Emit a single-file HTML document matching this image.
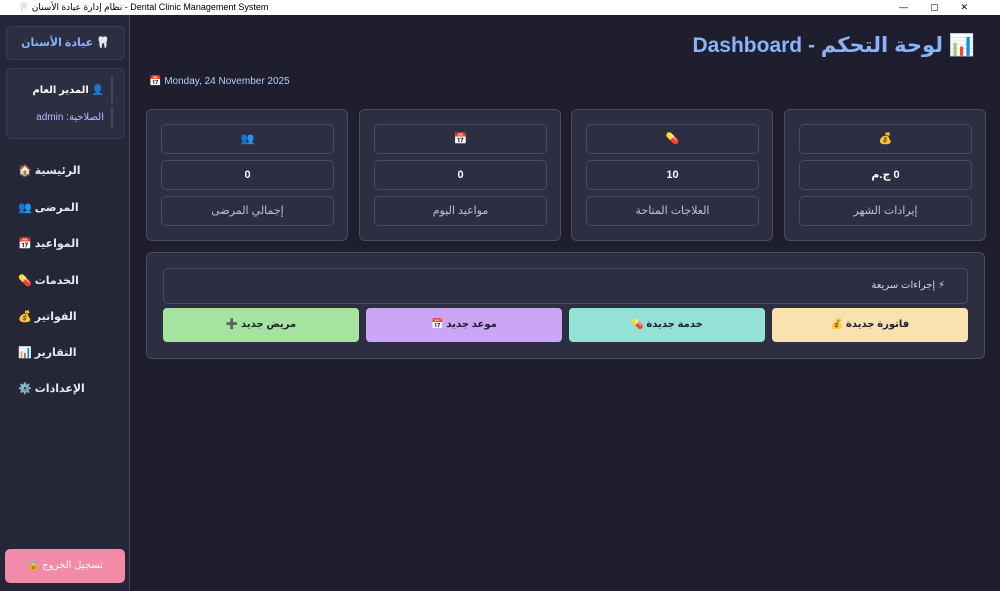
<!DOCTYPE html>
<html><head><meta charset="utf-8"><style>
*{box-sizing:border-box;margin:0;padding:0}
body{width:1000px;height:591px;overflow:hidden;background:#1e1e2e;font-family:"Liberation Sans","DejaVu Sans",sans-serif;color:#cdd6f4;position:relative;font-size:11px}
.tb{position:absolute;left:0;top:0;width:1000px;height:15px;background:#fff;color:#000;font-size:9px;line-height:15px;padding-left:18px}
.tb .ctl{position:absolute;right:10px;top:0;letter-spacing:22px}
.side{position:absolute;left:0;top:15px;width:130px;height:576px;background:#252638;border-right:1px solid #45475a}
.box{position:absolute;background:#2d2e42;border:1px solid #3c3d52;border-radius:5px}
.abs{position:absolute;white-space:nowrap}
.r{direction:rtl}
.nav{position:absolute;left:18px;font-size:11px;font-weight:bold;color:#e6e9f5;direction:rtl;white-space:nowrap}
.card{position:absolute;top:109px;width:202px;height:132px;background:#2d2e42;border:1px solid #4a4b60;border-radius:6px}
.in{position:absolute;left:14px;width:173px;height:30px;border:1px solid #4a4b60;border-radius:5px;text-align:center;line-height:28px;font-size:11px;direction:rtl}
.btn{position:absolute;top:308px;width:196px;height:34px;border-radius:4px;text-align:center;line-height:34px;color:#1e1e2e;font-weight:bold;font-size:10px;direction:rtl}
</style></head><body>
<div class="tb">🦷 نظام إدارة عيادة الأسنان - Dental Clinic Management System<span class="ctl">—▢✕</span></div>
<div class="side">
<div class="box r" style="left:6px;top:11px;width:119px;height:34px;text-align:center;line-height:32px;color:#89b4fa;font-size:11px;font-weight:bold">🦷 عيادة الأسنان</div>
<div class="box" style="left:6px;top:53px;width:119px;height:71px">
<div class="abs r" style="right:20px;top:16px;font-weight:bold;color:#fff;font-size:10px">👤 المدير العام</div>
<div class="abs r" style="right:20px;top:43px;color:#b4befe;font-size:10px">الصلاحية: admin</div>
<div class="abs" style="left:104px;top:8px;width:2px;height:26px;background:#45475a"></div>
<div class="abs" style="left:104px;top:38px;width:2px;height:22px;background:#45475a"></div>
</div>
<div class="nav" style="top:149px">الرئيسية 🏠</div>
<div class="nav" style="top:186px">المرضى 👥</div>
<div class="nav" style="top:222px">المواعيد 📅</div>
<div class="nav" style="top:259px">الخدمات 💊</div>
<div class="nav" style="top:295px">الفواتير 💰</div>
<div class="nav" style="top:331px">التقارير 📊</div>
<div class="nav" style="top:367px">الإعدادات ⚙️</div>
<div class="abs r" style="left:5px;top:534px;width:120px;height:34px;background:#f38ba8;border-radius:5px;text-align:center;line-height:34px;color:#fff;font-size:10px">تسجيل الخروج 🔒</div>
</div>
<div class="abs r" style="right:25px;top:33px;font-size:21px;font-weight:bold;color:#89b4fa">📊 لوحة التحكم - Dashboard</div>
<div class="abs" style="left:149px;top:76px;font-size:10px;color:#b4d0fa">📅 Monday, 24 November 2025</div>

<div class="card" style="left:146px"><div class="in" style="top:14px">👥</div><div class="in" style="top:50px;font-weight:bold;color:#fff">0</div><div class="in" style="top:86px;color:#bac2de">إجمالي المرضى</div></div>
<div class="card" style="left:359px"><div class="in" style="top:14px">📅</div><div class="in" style="top:50px;font-weight:bold;color:#fff">0</div><div class="in" style="top:86px;color:#bac2de">مواعيد اليوم</div></div>
<div class="card" style="left:571px"><div class="in" style="top:14px">💊</div><div class="in" style="top:50px;font-weight:bold;color:#fff">10</div><div class="in" style="top:86px;color:#bac2de">العلاجات المتاحة</div></div>
<div class="card" style="left:784px"><div class="in" style="top:14px">💰</div><div class="in" style="top:50px;font-weight:bold;color:#fff">0 ج.م</div><div class="in" style="top:86px;color:#bac2de">إيرادات الشهر</div></div>

<div class="abs" style="left:146px;top:252px;width:839px;height:107px;background:#2d2e42;border:1px solid #4a4b60;border-radius:6px"></div>
<div class="abs r" style="left:163px;top:268px;width:805px;height:36px;border:1px solid #4a4b60;border-radius:5px;text-align:right;padding-right:22px;line-height:34px;font-size:10px">⚡ إجراءات سريعة</div>
<div class="btn" style="left:163px;background:#a6e3a1">مريض جديد ➕</div>
<div class="btn" style="left:366px;background:#cba6f7">موعد جديد 📅</div>
<div class="btn" style="left:569px;background:#94e2d5">خدمة جديدة 💊</div>
<div class="btn" style="left:772px;background:#f9e2af">فاتورة جديدة 💰</div>
</body></html>
